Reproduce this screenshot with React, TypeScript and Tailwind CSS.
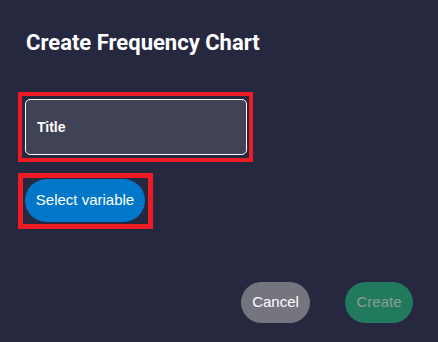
export default function App() {
    return (
        <div className="w-[438px] h-[342px] bg-[#262840] flex flex-col px-[18px] font-['Liberation_Sans',Arial,sans-serif]">
            <h2 className="mt-[29px] ml-[8px] text-[22px] leading-[28px] font-bold text-white font-['Roboto',sans-serif]">
                Create Frequency Chart
            </h2>
            <div className="mt-[35px] w-[235px] h-[70px] border-4 border-[#ed1c24] pl-[3px] pt-[3px] pr-[2px] pb-[3px]">
                <div className="h-full rounded-[5px] border border-white bg-[#404256] flex items-center pl-[11px]">
                    <span className="text-white text-[14px] font-bold">Title</span>
                </div>
            </div>
            <div className="mt-[11px] w-[135px] h-[56px] border-[5px] border-[#ed1c24] pl-[2px] pt-[1px]">
                <button className="w-[120px] h-[43px] rounded-full bg-[#0077c8] text-white text-[15px]">
                    Select variable
                </button>
            </div>
            <div className="mt-auto flex justify-end gap-[35px] pr-[7px] pb-[19px]">
                <button className="w-[69px] h-[41px] rounded-full bg-[#75757f] text-white text-[15px]">
                    Cancel
                </button>
                <button className="w-[68px] h-[41px] rounded-full bg-[#217a5d] text-[#8d9c95] text-[15px]">
                    Create
                </button>
            </div>
        </div>
    );
}
